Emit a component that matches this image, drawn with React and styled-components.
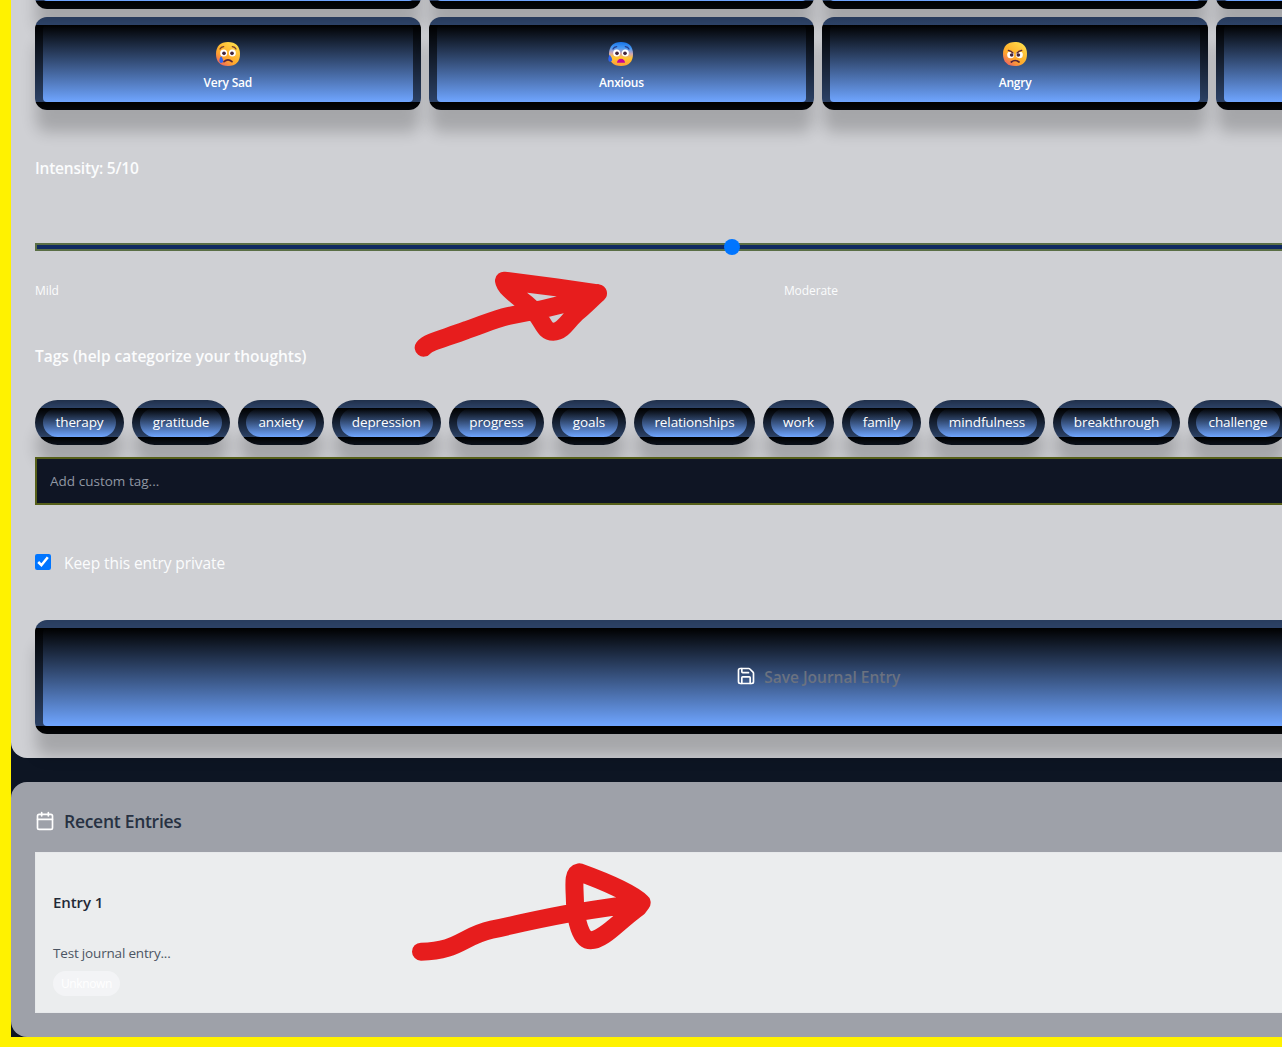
import React from "react";
import styled, { createGlobalStyle } from "styled-components";
import { Calendar, Save } from "lucide-react";

const GlobalStyle = createGlobalStyle`
  *, *::before, *::after { box-sizing: border-box; }
  body {
    margin: 0;
    overflow: hidden;
    background: #fff200;
    font-family: "Open Sans", "Noto Sans", sans-serif;
    color: #fbfcfd;
  }
`;

const Frame = styled.div`
  position: relative;
  height: 1047px;
  overflow: hidden;
  padding: 0 0 10px 11px;
  background: #fff200;
`;

const Page = styled.main`
  display: flex;
  flex-direction: column;
  gap: 24px;
  width: 1614.6px;
  height: 1037px;
  background: #0d1523;
`;

const EntryForm = styled.section`
  display: flex;
  flex-direction: column;
  flex: none;
  height: 758px;
  padding: 0 24px 24px;
  border-radius: 0 0 16px 16px;
  background: #cfd0d4;
`;

const MoodGrid = styled.div`
  display: grid;
  grid-template-columns: repeat(4, 1fr);
  grid-auto-rows: 92.7px;
  gap: 8px;
  flex: none;
  margin: -83.7px 0 46px;
`;

const GlossyButton = styled.button`
  display: flex;
  align-items: center;
  justify-content: center;
  border: 8px solid rgba(0, 0, 0, 0.6);
  border-radius: 12px;
  background: linear-gradient(to bottom, #000 0%, #6fa5ff 100%);
  box-shadow: 0 23px 15px -1px rgba(0, 0, 0, 0.2);
  color: #fff;
  font-family: inherit;
`;

const MoodButton = styled(GlossyButton)`
  flex-direction: column;
  gap: 8px;
  padding: 18px 8px 10px;
  font-size: 12px;
  font-weight: 600;
  line-height: 18px;
  letter-spacing: -0.2px;
`;

const FaceIcon = styled.svg`
  width: 26px;
  height: 24px;
  flex: none;
  overflow: visible;
`;

const FieldLabel = styled.label`
  display: block;
  flex: none;
  font-size: 15.5px;
  font-weight: 600;
  line-height: 24px;
  letter-spacing: ${(p) => p.$tracking || "0"};
`;

const Slider = styled.input`
  appearance: none;
  display: block;
  flex: none;
  width: 100%;
  height: 8px;
  margin: 63px 0 32px;
  padding: 0;
  border: 2px solid #5a6e45;
  background: #0f2961;
  &::-webkit-slider-thumb {
    appearance: none;
    width: 16px;
    height: 16px;
    border-radius: 50%;
    background: #0075ff;
  }
`;

const Scale = styled.div`
  display: flex;
  gap: 725px;
  flex: none;
  margin-bottom: 45px;
  font-size: 12px;
  line-height: 16px;
  letter-spacing: -0.08px;
`;

const TagRow = styled.div`
  display: flex;
  flex: none;
  gap: 8px;
  margin: 32px 0 12px;
`;

const Tag = styled(GlossyButton)`
  flex: none;
  width: ${(p) => p.$width}px;
  height: 45px;
  padding: 0 0 1px;
  border-radius: 999px;
  font-size: 13.5px;
  font-weight: 500;
  letter-spacing: -0.1px;
  white-space: nowrap;
`;

const TagInput = styled.input`
  position: relative;
  flex: none;
  width: 100%;
  height: 48px;
  padding: 0 13px;
  border: 2px solid #565f19;
  border-radius: 0;
  background: #0f1524;
  color: #fff;
  font: 400 13.5px "Open Sans", sans-serif;
  letter-spacing: 0.02px;
  &::placeholder { color: #9097a3; }
`;

const PrivacyRow = styled.label`
  display: flex;
  align-items: center;
  flex: none;
  gap: 13px;
  height: 24px;
  margin: 46px 0 45px;
  font-size: 15.5px;
  letter-spacing: -0.08px;
`;

const Checkbox = styled.input`
  width: 16px;
  height: 16px;
  margin: 0 0 1px;
  accent-color: #0075ff;
`;

const SaveButton = styled(GlossyButton)`
  flex: none;
  gap: 8px;
  height: 114px;
  font-size: 15.5px;
  font-weight: 600;
  svg { margin-bottom: 1px; }
`;

const SaveLabel = styled.span`
  color: #6b7280;
  letter-spacing: 0;
`;

const RecentPanel = styled.section`
  display: flex;
  flex-direction: column;
  flex: none;
  gap: 16px;
  height: 255px;
  padding: 24px;
  border-radius: 16px;
  background: #9ea1a9;
`;

const RecentTitle = styled.h2`
  display: flex;
  align-items: center;
  gap: 9px;
  height: 30px;
  margin: 0;
  color: #273142;
  font-size: 17.5px;
  font-weight: 600;
  letter-spacing: -0.28px;
  svg { color: #fff; }
`;

const EntryCard = styled.article`
  display: flex;
  flex-direction: column;
  align-items: flex-start;
  height: 161px;
  padding: 37px 17px 16px;
  border: 1px solid #e7e9eb;
  background: #ebedee;
`;

const EntryTitle = styled.h3`
  margin: 0 0 28px;
  color: #1f2937;
  font-size: 15px;
  font-weight: 600;
  line-height: 24px;
  letter-spacing: -0.1px;
`;

const EntryText = styled.p`
  margin: 0 0 7px;
  color: #4b5563;
  font-size: 13.5px;
  line-height: 22px;
  letter-spacing: -0.18px;
`;

const MoodBadge = styled.span`
  padding: 0 8px;
  border-radius: 999px;
  background: #f3f4f6;
  color: #fff;
  font-size: 12px;
  font-weight: 500;
  line-height: 25px;
  letter-spacing: -0.4px;
`;

const MarkerArrow = styled.svg`
  position: absolute;
  left: 400px;
  top: ${(p) => p.$top}px;
  width: 300px;
  height: 150px;
  pointer-events: none;
  fill: none;
  stroke: #e71d1d;
  stroke-width: 54;
  stroke-linecap: round;
  stroke-linejoin: round;
`;

function Face({ kind }) {
  const id = "skin-" + kind;
  const fearful = kind === "anxious";
  const angry = kind === "angry";
  const eyeY = angry ? 38 : 33;
  return (
    <FaceIcon viewBox="-3 0 78 72" aria-hidden="true">
      <defs>
        <linearGradient id={id} x1={fearful ? 0.5 : 0.85} y1="0" x2={fearful ? 0.45 : 0.1} y2="1">
          <stop offset="0" stopColor={fearful ? "#1774e8" : "#ffe34d"} />
          <stop offset="0.25" stopColor={fearful ? "#489af5" : "#ffc83e"} />
          <stop offset="0.48" stopColor={fearful ? "#d3a6b0" : "#ffb52f"} />
          <stop offset="0.65" stopColor={fearful ? "#ffc531" : "#ffa52f"} />
          <stop offset="1" stopColor={fearful ? "#ff9e35" : "#e9556d"} />
        </linearGradient>
      </defs>
      <path d="M36 0C59 0 72 13 72 36S60 72 36 72 0 59 0 36 13 0 36 0Z" fill={`url(#${id})`} />
      <circle cx="23" cy={eyeY} r="10.5" fill="#fff" />
      <circle cx="49" cy={eyeY} r="10.5" fill="#fff" />
      <circle cx={angry ? 26 : 24} cy={eyeY + 1} r="5.5" fill="#43243b" />
      <circle cx={angry ? 46 : 48} cy={eyeY + 1} r="5.5" fill="#43243b" />
      {angry ? (
        <>
          <path d="M12 27 31 34 27 25 14 22ZM60 27 41 34 45 25 58 22Z" fill="#ffb431" />
          <path d="M16 25q9 2 14 8M56 25q-9 2-14 8" fill="none" stroke="#5c2934" strokeWidth="4" strokeLinecap="round" />
          <path d="M25 60q11-9 23 0" fill="none" stroke="#54243a" strokeWidth="5" strokeLinecap="round" />
        </>
      ) : (
        <>
          <path d="M12 21q3-6 11-7M60 21q-3-6-11-7" fill="none" stroke={fearful ? "#273f90" : "#793f2d"} strokeWidth="4" strokeLinecap="round" />
          {fearful ? (
            <path d="M24 62c0-7 5-12 12-12s12 5 12 12Z" fill="#c40499" />
          ) : (
            <path d="M24 59q12-11 24 0" fill="none" stroke="#54243a" strokeWidth="5" strokeLinecap="round" />
          )}
          <path
            d={fearful ? "M2 38c-5 8-6 20 1 21 8 0 9-9-1-21Z" : "M15 43c-6 8-7 19 0 20 8 0 9-9 0-20Z"}
            fill="#2e63f0"
          />
        </>
      )}
    </FaceIcon>
  );
}

const moods = [
  { id: 1 },
  { id: 2 },
  { id: 3 },
  { id: 4 },
  { id: 5, label: "Very Sad", face: "sad" },
  { id: 6, label: "Anxious", face: "anxious" },
  { id: 7, label: "Angry", face: "angry" },
  { id: 8 },
];

const tags = [
  ["therapy", 89],
  ["gratitude", 98],
  ["anxiety", 85.5],
  ["depression", 109.5],
  ["progress", 95],
  ["goals", 74],
  ["relationships", 121],
  ["work", 71],
  ["family", 79],
  ["mindfulness", 116],
  ["breakthrough", 127],
  ["challenge", 100],
];

export default function App() {
  return (
    <>
      <GlobalStyle />
      <Frame>
        <Page>
          <EntryForm>
            <MoodGrid>
              {moods.map((mood) => (
                <MoodButton key={mood.id} type="button">
                  {mood.face && <Face kind={mood.face} />}
                  {mood.label}
                </MoodButton>
              ))}
            </MoodGrid>
            <FieldLabel $tracking="-0.2px">Intensity: 5/10</FieldLabel>
            <Slider type="range" min="1" max="10" defaultValue="5" />
            <Scale>
              <span>Mild</span>
              <span>Moderate</span>
            </Scale>
            <FieldLabel $tracking="0">Tags (help categorize your thoughts)</FieldLabel>
            <TagRow>
              {tags.map(([name, width]) => (
                <Tag key={name} type="button" $width={width}>{name}</Tag>
              ))}
            </TagRow>
            <TagInput placeholder="Add custom tag..." />
            <PrivacyRow>
              <Checkbox type="checkbox" defaultChecked />
              Keep this entry private
            </PrivacyRow>
            <SaveButton type="button">
              <Save size={20} />
              <SaveLabel>Save Journal Entry</SaveLabel>
            </SaveButton>
          </EntryForm>
          <RecentPanel>
            <RecentTitle>
              <Calendar size={20} />
              Recent Entries
            </RecentTitle>
            <EntryCard>
              <EntryTitle>Entry 1</EntryTitle>
              <EntryText>Test journal entry...</EntryText>
              <MoodBadge>Unknown</MoodBadge>
            </EntryCard>
          </RecentPanel>
        </Page>
        <MarkerArrow $top={230} viewBox="0 0 900 450">
          <path d="M71 353C85 335 135 325 200 300C245 285 285 267 325 258L420 239L500 220L594 190L470 172L312 152C315 174 353 199 379 221C433 265 426 305 460 305C489 305 505 270 530 248C556 227 573 208 594 190" />
        </MarkerArrow>
        <MarkerArrow $top={840} viewBox="0 0 900 450">
          <path d="M63 335C175 334 188 288 275 269C385 246 435 231 530 217Q620 203 725 188C697 161 610 123 538 97C517 101 524 137 525 190C528 240 541 301 572 301C610 301 655 245 715 202L725 188" />
        </MarkerArrow>
      </Frame>
    </>
  );
}
